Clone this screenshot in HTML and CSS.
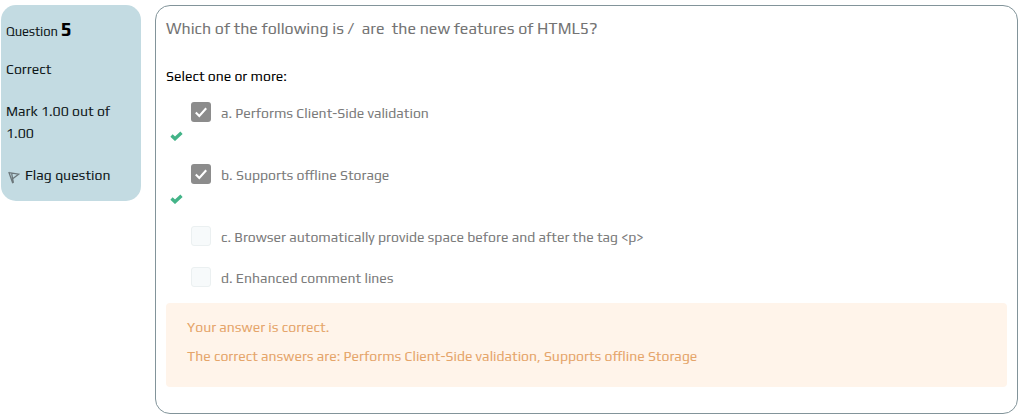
FILE: index.html
```html
<!DOCTYPE html>
<html lang="en">
<head>
<meta charset="utf-8">
<title>Question 5</title>
<link rel="stylesheet" href="styles.css">
</head>
<body>
<main class="question">
  <aside class="info">
    <h3 class="number">Question <b>5</b></h3>
    <div class="state">Correct</div>
    <div class="grade">Mark 1.00 out of 1.00</div>
    <div class="flag">
      <svg class="flag-icon" width="12" height="13" viewBox="0 0 12 13"><path d="M.8 1 4.8 12.2M3.6 2.2 5.4 11.8M1 1.6 10.6 3.2 5 7.4" fill="none" stroke="#6c777b" stroke-width="1.3"/></svg>
      <span>Flag question</span>
    </div>
  </aside>
  <section class="content">
    <p class="prompt">Which of the following is /&nbsp; are&nbsp; the new features of HTML5?</p>
    <p class="select">Select one or more:</p>
    <div class="answers">
      <div class="answer marked">
        <label class="option"><span class="box checked"><svg width="20" height="20" viewBox="0 0 20 20"><path d="m4.8 10.4 3.5 3.6L15.2 6.3" fill="none" stroke="#fff" stroke-width="2.1"/></svg></span><span>a. Performs Client-Side validation</span></label>
        <svg class="tick" width="13" height="10" viewBox="0 0 13 10"><path d="M1.5 4.5 5 7.8l6.5-6" fill="none" stroke="#43b488" stroke-width="3.3"/></svg>
      </div>
      <div class="answer marked">
        <label class="option"><span class="box checked"><svg width="20" height="20" viewBox="0 0 20 20"><path d="m4.8 10.4 3.5 3.6L15.2 6.3" fill="none" stroke="#fff" stroke-width="2.1"/></svg></span><span>b. Supports offline Storage</span></label>
        <svg class="tick tick-low" width="13" height="10" viewBox="0 0 13 10"><path d="M1.5 4.5 5 7.8l6.5-6" fill="none" stroke="#43b488" stroke-width="3.3"/></svg>
      </div>
      <div class="answer"><label class="option"><span class="box"></span><span>c. Browser automatically provide space before and after the tag &lt;p&gt;</span></label></div>
      <div class="answer"><label class="option"><span class="box"></span><span>d. Enhanced comment lines</span></label></div>
    </div>
    <div class="feedback">
      <p>Your answer is correct.</p>
      <p>The correct answers are: Performs Client-Side validation, Supports offline Storage</p>
    </div>
  </section>
</main>
</body>
</html>
```
FILE: styles.css
```css
* { box-sizing: border-box; }
body { margin: 0; background: #fff; font: 14px/22px Play, "Noto Sans", sans-serif; color: #10181b; overflow: hidden; }
p, h3 { margin: 0; font-weight: 400; }
.question { display: flex; align-items: flex-start; gap: 14px; padding: 5px 2px 0 1px; height: 420px; }
.info { width: 140px; height: 196px; flex: none; padding: 14px 5px 0; border-radius: 15px; background: #c3dbe2; }
.number { height: 22px; font-size: 13px; letter-spacing: -0.12px; line-height: 26px; white-space: nowrap; }
.number b { font-size: 19px; line-height: 20px; color: #000; }
.state { margin-top: 17px; }
.grade { margin-top: 20px; padding-right: 15px; }
.flag { display: flex; align-items: center; gap: 5px; margin-top: 20px; white-space: nowrap; }
.flag-icon { margin: 5px 0 0 2px; }
.content { width: 863px; height: 409px; padding: 12px 10px 0; border: 1px solid #82949a; border-radius: 15px; white-space: nowrap; }
.prompt { font-size: 16px; line-height: 22px; color: #747474; }
.select { margin-top: 25px; color: #000; }
.answers { display: flex; flex-direction: column; height: 216px; padding-top: 14px; color: #7b7b7b; }
.answer { height: 41px; flex: none; }
.marked { height: 62px; }
.option { display: flex; align-items: center; gap: 10px; height: 22px; padding-left: 25px; }
.option > span:last-child { padding-top: 2px; }
.box { width: 20px; height: 20px; flex: none; border: 1px solid #ebf0f1; border-radius: 3px; background: #f7fafb; }
.checked { border: 0; background: #8c8c8c; }
.box svg, .tick { display: block; }
.tick { margin: 8px 0 0 4px; }
.tick-low { margin-top: 9px; }
.feedback { width: 841px; height: 84px; padding: 13px 21px; border-radius: 4px; background: #fff4ea; color: #e5a56a; }
.feedback p + p { margin-top: 7px; }
```
